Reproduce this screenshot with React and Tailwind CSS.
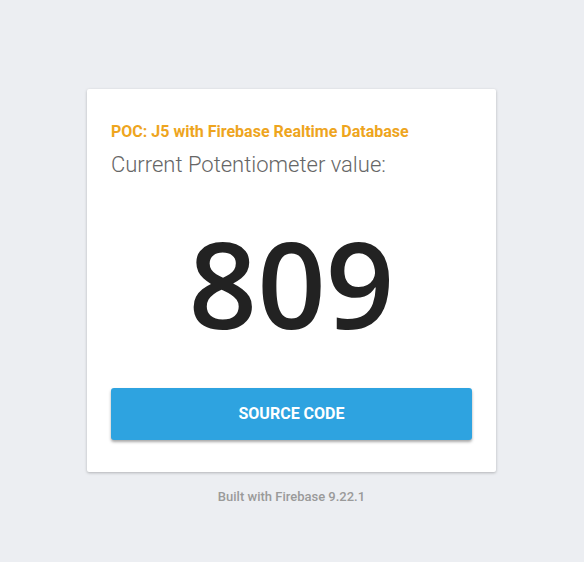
export default function App() {
  return (
    <div className="min-h-[562px] w-full bg-[#eceef2] flex flex-col items-center pt-[89px] pr-[1px]">
      <div className="w-[409px] bg-white rounded-[2px] shadow-[0_1px_3px_rgba(0,0,0,0.25)] px-6 pt-[31px] pb-[32px]">
        <h2 className="font-['Roboto',sans-serif] font-bold text-[16px] leading-[24px] text-[#eea51e]">
          POC: J5 with Firebase Realtime Database
        </h2>
        <p className="font-['Roboto',sans-serif] font-light text-[22px] leading-[30px] text-[#666666] mt-[6px]">
          Current Potentiometer value:
        </p>
        <div className="font-['Open_Sans',sans-serif] font-[650] text-[120px] leading-[160px] text-[#222222] text-center mt-[23px]">
          809
        </div>
        <button className="mt-[25px] w-full h-[52px] bg-[#2ea3e0] rounded-[3px] shadow-[0_2px_3px_rgba(0,0,0,0.35)] font-['Roboto',sans-serif] font-bold text-[16px] text-white">
          SOURCE CODE
        </button>
      </div>
      <div className="mt-[16px] font-['Roboto',sans-serif] font-medium text-[13px] leading-[18px] text-[#9a9a9a]">
        Built with Firebase 9.22.1
      </div>
    </div>
  );
}
